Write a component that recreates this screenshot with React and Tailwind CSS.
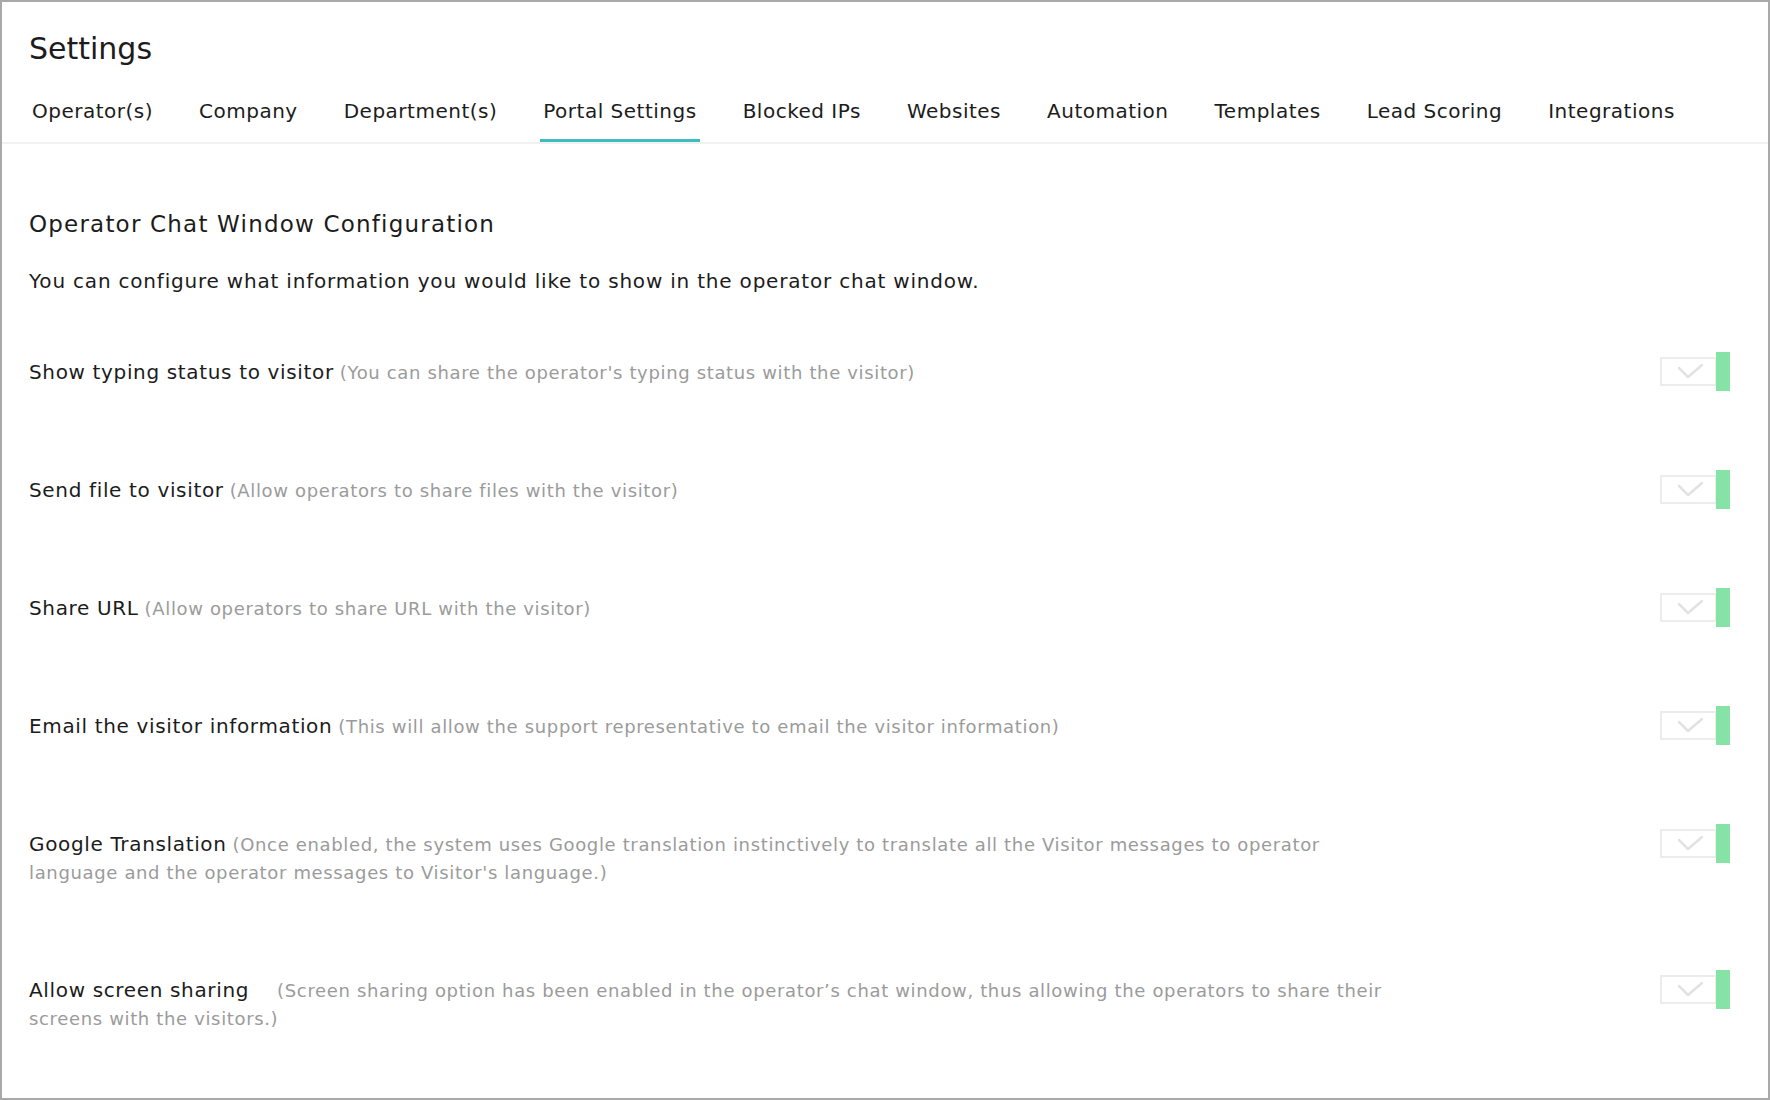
import React from "react";

const tabs = [
  "Operator(s)",
  "Company",
  "Department(s)",
  "Portal Settings",
  "Blocked IPs",
  "Websites",
  "Automation",
  "Templates",
  "Lead Scoring",
  "Integrations",
];

const rows = [
  { label: "Show typing status to visitor", desc: "(You can share the operator's typing status with the visitor)" },
  { label: "Send file to visitor", desc: "(Allow operators to share files with the visitor)" },
  { label: "Share URL", desc: "(Allow operators to share URL with the visitor)" },
  { label: "Email the visitor information", desc: "(This will allow the support representative to email the visitor information)" },
  {
    label: "Google Translation",
    desc: "(Once enabled, the system uses Google translation instinctively to translate all the Visitor messages to operator language and the operator messages to Visitor's language.)",
  },
  {
    label: "Allow screen sharing",
    desc: "(Screen sharing option has been enabled in the operator\u2019s chat window, thus allowing the operators to share their screens with the visitors.)",
    wide: true,
  },
];

const Toggle = () => (
  <div className="flex items-center -mt-[6px] -mb-[5px] shrink-0">
    <div className="w-[57px] h-[29px] border-2 border-[#ececec] flex items-center justify-center pl-[3px]">
      <svg width="25" height="15" viewBox="0 0 25 15" fill="none">
        <polyline points="1,4 10,13 24,1" stroke="#e2e2e2" strokeWidth="2.5" strokeLinecap="round" strokeLinejoin="round" />
      </svg>
    </div>
    <div className="w-[14px] h-[39px] bg-[#86e3a6] -ml-[1px]"></div>
  </div>
);

export default function App() {
  return (
    <div className="w-[1770px] h-[1100px] border-2 border-[#a9a9a9] bg-white overflow-hidden font-['DejaVu_Sans',sans-serif] text-[#1c1c1c]">
      <div className="px-[27px] pt-[28px]">
        <h1 className="text-[30px] leading-[38px] font-normal">Settings</h1>
      </div>

      <nav className="mt-[29px] flex gap-[40px] px-[27px] border-b-2 border-[#f1f1f1]">
        {tabs.map((t) => (
          <div
            key={t}
            className={
              t === "Portal Settings"
                ? "px-[3px] pb-[14px] border-b-[3px] border-[#3dbdbd] text-[20px] leading-[28px] tracking-[0.5px]"
                : "px-[3px] pb-[14px] border-b-[3px] border-transparent text-[20px] leading-[28px] tracking-[0.5px]"
            }
          >
            {t}
          </div>
        ))}
      </nav>

      <div className="pl-[27px] pr-[38px] pt-[63px]">
        <h2 className="text-[23px] leading-[34px] font-normal tracking-[1.2px]">Operator Chat Window Configuration</h2>
        <p className="mt-[26px] text-[20px] leading-[28px] tracking-[0.8px]">
          You can configure what information you would like to show in the operator chat window.
        </p>

        <div className="mt-[63px] flex flex-col gap-[90px]">
          {rows.map((r) => (
            <div key={r.label} className="flex items-start justify-between">
              <div className="w-[1380px] text-[20px] leading-[28px] tracking-[0.65px]">
                <span className="text-[#1c1c1c]">{r.label}</span>
                <span
                  className={
                    r.wide
                      ? "ml-[28px] text-[18px] leading-[20px] text-[#9b9b9b]"
                      : "ml-[6px] text-[18px] leading-[20px] text-[#9b9b9b]"
                  }
                >
                  {r.desc}
                </span>
              </div>
              <Toggle />
            </div>
          ))}
        </div>
      </div>
    </div>
  );
}
